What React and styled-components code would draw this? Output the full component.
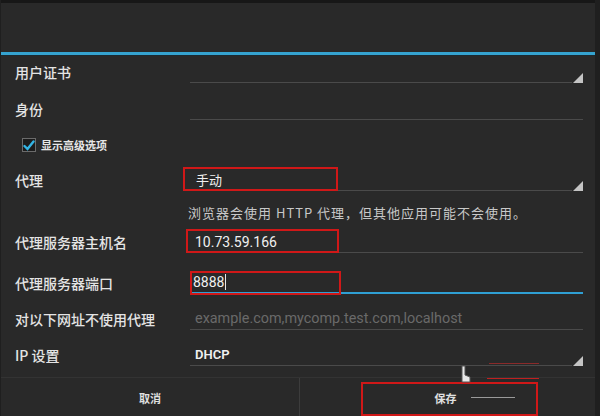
import React from 'react';
import styled, { createGlobalStyle } from 'styled-components';

const GlobalStyle = createGlobalStyle`
  html, body {
    margin: 0;
    padding: 0;
    background: #292929;
  }
`;

const Screen = styled.div`
  position: relative;
  width: 600px;
  height: 416px;
  overflow: hidden;
  background: #292929;
  box-sizing: border-box;
  border-right: 5px solid #1f1f1f;
  border-left: 1px solid #1f1f1f;
  font-family: "Noto Sans CJK SC", Roboto, sans-serif;
  color: #e2e2e2;
`;

const Header = styled.div`
  height: 49px;
  border-top: 3px solid #171717;
`;

const Divider = styled.div`
  height: 3px;
  background: #35a3d0;
  border-bottom: 1px solid #1b2a31;
`;

const Row = styled.div`
  display: grid;
  grid-template-columns: 189px 1fr;
  align-items: center;
  height: ${p => p.h}px;
  padding-right: 12px;
`;

const Label = styled.div`
  padding-left: 14px;
  font-size: 14px;
  font-weight: 500;
  line-height: 1;
  color: #e4e4e4;
  white-space: nowrap;
`;

const Field = styled.div`
  position: relative;
  height: 22px;
  box-sizing: border-box;
  padding-left: 5px;
  display: flex;
  align-items: center;
  border-bottom: ${p => (p.focused ? '2px solid #2f9fd3' : '1px solid #4a4a4a')};
  margin-right: ${p => (p.spinner ? '11px' : '0')};
  font-family: Roboto, "Noto Sans CJK SC", sans-serif;
  font-size: ${p => (p.hint ? '14.4px' : '14px')};
  color: ${p => (p.hint ? '#6a6a6a' : '#f0f0f0')};
  font-weight: ${p => (p.bold ? 600 : 400)};
  white-space: nowrap;
`;

const SpinnerArrow = styled.span`
  position: absolute;
  right: -11px;
  bottom: -1px;
  width: 0;
  height: 0;
  border-left: 10px solid transparent;
  border-bottom: 10px solid #c4c4c4;
`;

const Caret = styled.span`
  display: inline-block;
  width: 1px;
  height: 16px;
  margin-left: 1px;
  background: #e8e8e8;
`;

const RedBox = styled.span`
  position: absolute;
  left: ${p => p.x}px;
  top: ${p => p.y}px;
  width: ${p => p.w}px;
  height: ${p => p.hgt}px;
  border: 2px solid #d01818;
  box-sizing: border-box;
  pointer-events: none;
`;

const CheckRow = styled.div`
  display: flex;
  align-items: center;
  gap: 5px;
  height: ${p => p.h}px;
  padding-left: 21px;
`;

const CheckBox = styled.span`
  width: 12px;
  height: 12px;
  border: 1px solid #6b6b6b;
  background: #1c1c1c;
  display: flex;
  align-items: center;
  justify-content: center;
`;

const SmallLabel = styled.span`
  font-size: 11px;
  font-weight: 700;
  color: #e6e6e6;
`;

const Hint = styled.div`
  grid-column: 2;
  margin-left: -2px;
  font-size: 13px;
  letter-spacing: 1px;
  color: #c8c8c8;
  white-space: nowrap;
`;

const ButtonBar = styled.div`
  display: grid;
  grid-template-columns: 298px 1fr;
  height: ${p => p.h}px;
  border-top: 1px solid #333;
  box-sizing: border-box;
`;

const DialogButton = styled.div`
  position: relative;
  display: flex;
  align-items: center;
  justify-content: center;
  font-size: 11px;
  font-weight: 700;
  color: #e0e0e0;
  border-left: ${p => (p.divided ? '1px solid #3c3c3c' : 'none')};
`;

const Pointer = styled.svg`
  position: absolute;
  left: 459px;
  top: 365px;
`;

const Glitch = styled.span`
  position: absolute;
  left: ${p => p.x}px;
  top: ${p => p.y}px;
  width: ${p => p.w}px;
  height: 1px;
  background: ${p => p.c};
`;

const Check = () => (
  <svg width="12" height="11" viewBox="0 0 12 11">
    <path d="M1.5 6 L4.5 9 L10.5 1.5" fill="none" stroke="#33b5e5" strokeWidth="2.4" strokeLinecap="round" />
  </svg>
);

export default function App() {
  return (
    <>
      <GlobalStyle />
      <Screen>
        <Header />
        <Divider />

        <Row h={31}>
          <Label>用户证书</Label>
          <Field spinner><SpinnerArrow /></Field>
        </Row>

        <Row h={44}>
          <Label>身份</Label>
          <Field />
        </Row>

        <CheckRow h={28}>
          <CheckBox><Check /></CheckBox>
          <SmallLabel>显示高级选项</SmallLabel>
        </CheckRow>

        <Row h={42}>
          <Label>代理</Label>
          <Field spinner>
            <span style={{ fontFamily: '"Noto Sans CJK SC"', fontSize: 13, paddingLeft: 1 }}>手动</span>
            <SpinnerArrow />
            <RedBox x={-7} y={-2} w={155} hgt={24} />
          </Field>
        </Row>

        <Row h={22}>
          <Hint>浏览器会使用 HTTP 代理，但其他应用可能不会使用。</Hint>
        </Row>

        <Row h={38}>
          <Label>代理服务器主机名</Label>
          <Field>
            10.73.59.166
            <RedBox x={-4} y={-2} w={153} hgt={24} />
          </Field>
        </Row>

        <Row h={44}>
          <Label>代理服务器端口</Label>
          <Field focused>
            <span style={{ marginLeft: -2 }}>8888</span>
            <Caret />
            <RedBox x={0} y={-1} w={151} hgt={24} />
          </Field>
        </Row>

        <Row h={28}>
          <Label>对以下网址不使用代理</Label>
          <Field hint>example.com,mycomp.test.com,localhost</Field>
        </Row>

        <Row h={44}>
          <Label>IP 设置</Label>
          <Field spinner bold>
            <span style={{ fontSize: 13 }}>DHCP</span>
            <SpinnerArrow />
          </Field>
        </Row>

        <ButtonBar h={40}>
          <DialogButton>取消</DialogButton>
          <DialogButton divided>
            <span style={{ marginRight: 4 }}>保存</span>
            <RedBox x={61} y={4} w={177} hgt={34} />
          </DialogButton>
        </ButtonBar>

        <Glitch x={488} y={363} w={50} c="#8a2a2a" />
        <Glitch x={486} y={378} w={52} c="#c02020" />
        <Glitch x={470} y={397} w={44} c="#9a9a9a" />

        <Pointer width="12" height="20" viewBox="0 0 12 20">
          <path d="M2 1 L5 1 L5 10 L10 12 L10 17 L2 17 Z" fill="#e8e8e8" stroke="#555" strokeWidth="1" />
        </Pointer>
      </Screen>
    </>
  );
}
